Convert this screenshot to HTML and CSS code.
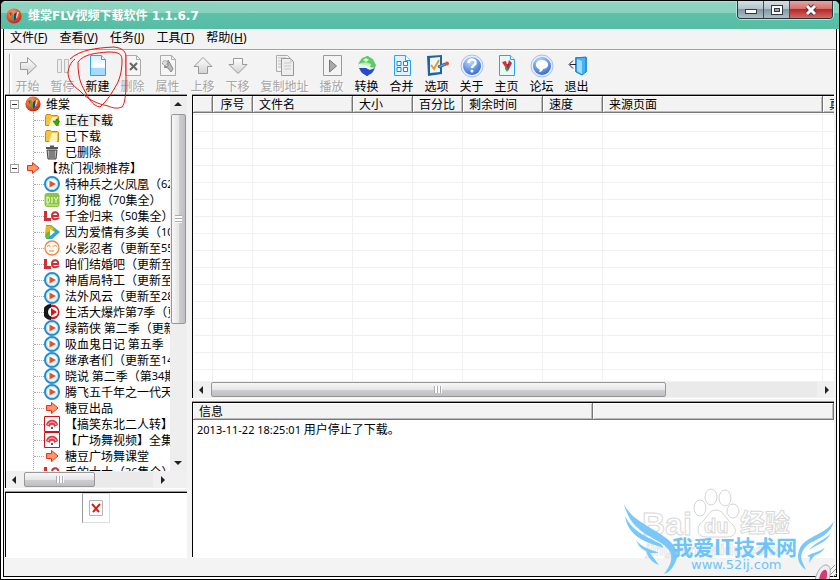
FILE: index.html
```html
<!DOCTYPE html>
<html lang="zh-CN">
<head>
<meta charset="utf-8">
<title>维棠FLV视频下载软件</title>
<link rel="stylesheet" href="styles.css">
</head>
<body>
<svg class="defs" aria-hidden="true">
  <defs>
    <radialGradient id="gRed" cx=".4" cy=".3" r=".8"><stop offset="0" stop-color="#ff9a6a"/><stop offset=".5" stop-color="#ef5434"/><stop offset="1" stop-color="#a81d10"/></radialGradient>
    <radialGradient id="gBlue" cx=".4" cy=".25" r=".8"><stop offset="0" stop-color="#c4dcff"/><stop offset=".55" stop-color="#6a9be8"/><stop offset="1" stop-color="#3567c4"/></radialGradient>
    <linearGradient id="gPage" x2="0" y2="1"><stop offset="0" stop-color="#d4ecff"/><stop offset=".5" stop-color="#fff"/><stop offset="1" stop-color="#a9dcfb"/></linearGradient>
    <linearGradient id="gGray" x2="0" y2="1"><stop offset="0" stop-color="#fff"/><stop offset="1" stop-color="#d2d2d2"/></linearGradient>
    <linearGradient id="gBall" x2="0" y2="1"><stop offset="0" stop-color="#4fc860"/><stop offset=".45" stop-color="#c8f2cc"/><stop offset=".6" stop-color="#e8f0fa"/><stop offset="1" stop-color="#1c35c8"/></linearGradient>
  </defs>
  <symbol id="logo" viewBox="0 0 16 16"><circle cx="8" cy="8" r="7.6" fill="url(#gRed)"/><path d="M3 5l3-1 2 7-2-1z" fill="#e02010"/><path d="M5 4l2 1 1 8-3-3z" fill="#38b82c"/><path d="M8 6l3-2-1 7-2 2z" fill="#2436c8"/><path d="M11 4l2 0-2 6-1 0z" fill="#f8e040"/></symbol>
  <symbol id="right" viewBox="0 0 24 24"><path d="M4.500 8.500h7v-5l9 8.500-9 8.500v-5h-7z" fill="url(#gGray)" stroke="#999"/></symbol>
  <symbol id="pause" viewBox="0 0 24 24"><path d="M6.500 5.500h4v13h-4zM13.500 5.500h4v13h-4z" fill="#eee" stroke="#bbb"/></symbol>
  <symbol id="new" viewBox="0 0 24 24"><path d="M4.500 1.500h11l4 4v16h-15z" fill="url(#gPage)" stroke="#2aa5f2"/><path d="M5 14h14v7h-14z" fill="#a6d9fb"/><path d="M15.500 1.500v4h4" fill="#e9f7ff" stroke="#2aa5f2"/></symbol>
  <symbol id="del" viewBox="0 0 24 24"><path d="M4.500 1.500h11l4 4v16h-15z" fill="#f6f6f6" stroke="#aaa"/><path d="M15.500 1.500v4h4" fill="none" stroke="#aaa"/><path d="M9 9l7 7M16 9l-7 7" stroke="#666" stroke-width="2"/></symbol>
  <symbol id="prop" viewBox="0 0 24 24"><path d="M4.500 1.500h11l4 4v16h-15z" fill="#f6f6f6" stroke="#aaa"/><path d="M15.500 1.500v4h4" fill="none" stroke="#aaa"/><circle cx="9" cy="9" r="2.500" fill="#ddd" stroke="#888" stroke-dasharray="2 1"/><path d="M12 6l3 5 2 4-2 3-3-4-4-1 4-1z" fill="#bbb" stroke="#888"/></symbol>
  <symbol id="up" viewBox="0 0 24 24"><path d="M12 3.500l9 9h-4.500v7h-9v-7H3z" fill="url(#gGray)" stroke="#999"/></symbol>
  <symbol id="down" viewBox="0 0 24 24"><path d="M12 19.500l9-9h-4.500v-6h-9v6H3z" fill="url(#gGray)" stroke="#999"/></symbol>
  <symbol id="copy" viewBox="0 0 24 24"><path d="M3.500 1.500h11l3 3v13h-14z" fill="#f4f4f4" stroke="#aaa"/><path d="M5 4h8M5 7h4M5 10h3M5 13h3" stroke="#bbb"/><path d="M8.500 4.500h9l3 3v14h-12z" fill="#eee" stroke="#999"/><path d="M17.500 4.500v3h3M11 9h7M11 12h7M11 15h7" fill="none" stroke="#c8c8c8"/></symbol>
  <symbol id="play" viewBox="0 0 24 24"><path d="M3.500 1.500h18v20h-18z" fill="#f4f4f4" stroke="#999"/><path d="M9.500 6v12l7-6z" fill="#aaa" stroke="#777"/></symbol>
  <symbol id="convert" viewBox="0 0 24 24"><path d="M12 2l6 3 3 6-2 6-7 5-7-5-2-6 4-6z" fill="url(#gBall)"/><path d="M3 10l4-6 6-2 5 4 3 5-1 3-5-1 1-3-5-2-5 1z" fill="#5ecb64"/><path d="M8 6l3-2 3 2-3 2z" fill="#d6f6d6"/><path d="M4 14h7l4 2 5-2-3 5-5 3-5-3z" fill="#2848d0"/><path d="M4 11l6 1 5 3" fill="none" stroke="#fff" stroke-width="1.500"/></symbol>
  <symbol id="merge" viewBox="0 0 24 24"><path d="M4.500 1.500h11l5 5v15h-16z" fill="#dff2ff" stroke="#2aa5f2"/><path d="M15.500 1.500v5h5" fill="#fff" stroke="#2aa5f2"/><path d="M7 7.500h4v4h-4zM13.500 7.500h4v4h-4zM7 13.500h4v4h-4zM13.500 13.500h4v4h-4z" fill="#fff" stroke="#1984dc"/></symbol>
  <symbol id="option" viewBox="0 0 24 24"><path d="M2 2l15-1v19l-14 2z" fill="#1e62ad"/><path d="M5 4l10-1v15l-10 1z" fill="#eef6ff"/><path d="M6 11l3 4 5-9" fill="none" stroke="#e79a24" stroke-width="2"/><path d="M13 12l7-3 1 2-7 3z" fill="#5ba2dc" stroke="#35679c"/><circle cx="22" cy="9.500" r="2" fill="#ef4832"/></symbol>
  <symbol id="about" viewBox="0 0 24 24"><circle cx="12" cy="12" r="11" fill="#e8effb" stroke="#a5bfe9"/><circle cx="12" cy="12" r="9" fill="url(#gBlue)"/><path d="M8.500 9c0-5 8-4 7 0 0 2-3.500 2-3.500 5" fill="none" stroke="#fff" stroke-width="2.500"/><circle cx="12" cy="17" r="1.500" fill="#fff"/></symbol>
  <symbol id="home" viewBox="0 0 24 24"><path d="M4.500 1.500h11l4 4v16h-15z" fill="#e8f6ff" stroke="#2aa5f2"/><path d="M15.500 1.500v4h4" fill="#fff" stroke="#2aa5f2"/><path d="M7 8l4-1 2 7-1 2z" fill="#e02b1b"/><path d="M10 10l3 6-1 2-2-3z" fill="#27b32f"/><path d="M14 6l3 3-4 8-1-4z" fill="#e02b1b"/><path d="M12 10l2 0-1 6z" fill="#2a3fc8"/></symbol>
  <symbol id="forum" viewBox="0 0 24 24"><circle cx="12" cy="12" r="11" fill="#e8effb" stroke="#a5bfe9"/><circle cx="12" cy="12" r="9" fill="url(#gBlue)"/><path d="M12 6c8 0 8 9 1 9-1 3-3 3-4 3 1-1 1-2 0-3-5-2-4-9 3-9z" fill="#fff"/></symbol>
  <symbol id="exit" viewBox="0 0 24 24"><path d="M10.500 3.500h11v14h-11z" fill="#fff" stroke="#2aa5f2"/><path d="M11 4l10-1v15l-4 3-6-3z" fill="#45b2f5" stroke="#167fd3"/><path d="M12 5l5 2v13l-5-3z" fill="#9bdcff"/><path d="M11 10.500h-6M8 6.500l-4 4 4 4" fill="none" stroke="#223"/></symbol>
  <symbol id="folder" viewBox="0 0 16 16"><path d="M1.500 4.500l1-2h4l1 1h6l1 1v9h-13z" fill="#f5c542" stroke="#c08a1c"/><path d="M8 5h5v9H5z" fill="#fdf3b8"/></symbol>
  <symbol id="trash" viewBox="0 0 16 16"><path d="M2 4h12M6 2.500h4" stroke="#555" stroke-width="2"/><path d="M3 6h10l-1 9H4z" fill="#bbb" stroke="#444"/><path d="M6 6v8M8 6v8M10 6v8" stroke="#444"/></symbol>
  <symbol id="arrow" viewBox="0 0 16 16"><path d="M2.500 5.500h5v-3l6.500 5.500-6.500 5.500v-3h-5z" fill="#ff9668" stroke="#e8321c"/></symbol>
  <symbol id="vid" viewBox="0 0 16 16"><circle cx="8" cy="8" r="7" fill="#fff" stroke="#238fd2" stroke-width="2"/><circle cx="8" cy="8" r="5.500" fill="none" stroke="#a6dcf8"/><path d="M5.500 4.500l6.500 3.500-6.500 3.500z" fill="#ee4e2c"/></symbol>
  <symbol id="diy" viewBox="0 0 16 16"><rect x=".5" y="1" width="15" height="14" rx="3" fill="#8cc63e"/><path d="M3 5v6h1c2 0 2-6 0-6zM8 5v6M10 5l2 3 2-3M12 8v3" fill="none" stroke="#fff"/><path d="M2 13h12" stroke="#d9efb8"/></symbol>
  <symbol id="le" viewBox="0 0 16 16"><path d="M1.500 3v8.500h5.500" fill="none" stroke="#cf2f35" stroke-width="3"/><path d="M8 8h6c1-5-6-5-6 0 0 4 4 4 7 2" fill="none" stroke="#cf2f35" stroke-width="2"/></symbol>
  <symbol id="tri" viewBox="0 0 16 16"><path d="M2 1l5 0 9 7-8 7H2z" fill="#2aa6e0"/><path d="M2 1h5l5 5-9 9-2-2z" fill="#6fbe28"/><path d="M2 2l5 0 3 3-8 4z" fill="#f3b51e"/><path d="M6 5l5 3-5 4z" fill="#fff"/></symbol>
  <symbol id="face" viewBox="0 0 16 16"><circle cx="8" cy="8" r="7" fill="#fff6ed" stroke="#ee8438" stroke-width="1.300"/><path d="M3 7c1-2 3-2 3 0M9 7c1-2 3-2 4 0M5 11h5" fill="none" stroke="#ee8438"/></symbol>
  <symbol id="dark" viewBox="0 0 16 16"><circle cx="8" cy="8" r="7.500" fill="#d6141c"/><path d="M7 0a8 8 0 0 0 0 16z" fill="#181818"/><circle cx="9" cy="8" r="5" fill="#fff"/><path d="M7 4l6 4-6 4z" fill="#d6141c"/></symbol>
  <symbol id="fan" viewBox="0 0 16 16"><path d="M.5.5h15v15H.5z" fill="#fff" stroke="#d3131b"/><path d="M2 9c1-7 11-7 12 0l-4 2H6z" fill="#e33c48"/><path d="M4 9c1-4 7-4 8 0" fill="none" stroke="#fbc5c8"/><path d="M6 11c0-3 4-3 4 0z" fill="#fff"/><circle cx="8" cy="12" r="1" fill="#222"/></symbol>
</svg>

<div class="window">
  <header class="title">
    <svg class="i16"><use href="#logo"/></svg>
    <h1>维棠FLV视频下载软件 1.1.6.7</h1>
    <div class="caps">
      <button aria-label="最小化"><svg width="14" height="12"><rect x="1.500" y="5.500" width="11" height="4" fill="#fff" stroke="#333a44"/></svg></button>
      <button aria-label="最大化"><svg width="14" height="12"><rect x="1.500" y="1.500" width="11" height="9" fill="#fff" stroke="#333a44"/><rect x="4.500" y="4.500" width="5" height="3" fill="#8fa7b8" stroke="#333a44"/></svg></button>
      <button class="close" aria-label="关闭"><svg width="14" height="12"><path d="M3 2l8 8M11 2l-8 8" stroke="#553244" stroke-width="5"/><path d="M3 2l8 8M11 2l-8 8" stroke="#fff" stroke-width="3"/></svg></button>
    </div>
  </header>
  <div class="client">
    <nav class="menu">
      <button>文件<span>(<u>F</u>)</span></button><button>查看<span>(<u>V</u>)</span></button><button>任务<span>(<u>J</u>)</span></button><button>工具<span>(<u>T</u>)</span></button><button>帮助<span>(<u>H</u>)</span></button>
    </nav>
    <div class="tools">
      <button disabled><svg><use href="#right"/></svg>开始</button>
      <button disabled><svg><use href="#pause"/></svg>暂停</button>
      <button><svg><use href="#new"/></svg>新建</button>
      <button disabled><svg><use href="#del"/></svg>删除</button>
      <button disabled><svg><use href="#prop"/></svg>属性</button>
      <button disabled><svg><use href="#up"/></svg>上移</button>
      <button disabled><svg><use href="#down"/></svg>下移</button>
      <button disabled class="wide"><svg><use href="#copy"/></svg>复制地址</button>
      <button disabled><svg><use href="#play"/></svg>播放</button>
      <button><svg><use href="#convert"/></svg>转换</button>
      <button><svg><use href="#merge"/></svg>合并</button>
      <button><svg><use href="#option"/></svg>选项</button>
      <button><svg><use href="#about"/></svg>关于</button>
      <button><svg><use href="#home"/></svg>主页</button>
      <button><svg><use href="#forum"/></svg>论坛</button>
      <button><svg><use href="#exit"/></svg>退出</button>
    </div>
    <main>
      <aside>
        <section class="panel treebox">
          <div class="treearea">
            <ul class="tree">
              <li class="root"><div class="row"><i class="box"></i><svg><use href="#logo"/></svg>维棠</div>
                <ul>
                  <li><svg><use href="#folder"/><path d="M9 9h3V7h2v2h2l-3.500 5z" fill="#22b022" stroke="#0a7a12" stroke-width=".5"/></svg><mark>正在下载</mark></li>
                  <li><svg><use href="#folder"/></svg>已下载</li>
                  <li><svg><use href="#trash"/></svg>已删除</li>
                </ul>
              </li>
              <li class="root"><div class="row"><i class="box"></i><svg><use href="#arrow"/></svg>【热门视频推荐】</div>
                <ul>
                  <li><svg><use href="#vid"/></svg>特种兵之火凤凰（<b>62</b></li>
                  <li><svg><use href="#diy"/></svg>打狗棍（<b>70</b>集全）</li>
                  <li><svg><use href="#le"/></svg>千金归来（<b>50</b>集全）</li>
                  <li><svg><use href="#tri"/></svg>因为爱情有多美（<b>10</b></li>
                  <li><svg><use href="#face"/></svg>火影忍者（更新至<b>55</b></li>
                  <li><svg><use href="#le"/></svg>咱们结婚吧（更新至</li>
                  <li><svg><use href="#vid"/></svg>神盾局特工（更新至</li>
                  <li><svg><use href="#vid"/></svg>法外风云（更新至<b>28</b></li>
                  <li><svg><use href="#dark"/></svg>生活大爆炸第<b>7</b>季（更</li>
                  <li><svg><use href="#vid"/></svg>绿箭侠 第二季（更新</li>
                  <li><svg><use href="#vid"/></svg>吸血鬼日记 第五季（</li>
                  <li><svg><use href="#vid"/></svg>继承者们（更新至<b>14</b></li>
                  <li><svg><use href="#vid"/></svg>晓说 第二季（第<b>34</b>期</li>
                  <li><svg><use href="#vid"/></svg>腾飞五千年之一代天</li>
                  <li><svg><use href="#arrow"/></svg>糖豆出品</li>
                  <li><svg><use href="#fan"/></svg>【搞笑东北二人转】</li>
                  <li><svg><use href="#fan"/></svg>【广场舞视频】全集</li>
                  <li><svg><use href="#arrow"/></svg>糖豆广场舞课堂</li>
                  <li><svg><use href="#le"/></svg>手的大大（<b>36</b>集全）</li>
                </ul>
              </li>
            </ul>
          </div>
          <div class="vbar"><i class="up"></i><div class="thumb"><span></span></div><i class="down"></i></div>
          <div class="hbar"><i class="left"></i><div class="track"><div class="thumb"><span></span></div></div><i class="rt"></i></div>
        </section>
        <section class="panel preview">
          <div class="broken"><svg width="14" height="16"><path d="M.5.5h13v15H.5z" fill="#fff" stroke="#b5b5b5"/><path d="M3 4l7 8M11 4l-7 8" stroke="#d82018" stroke-width="2"/></svg></div>
        </section>
      </aside>
      <div class="right">
        <section class="panel list">
          <div class="listarea">
            <table>
              <colgroup><col class="c20"><col class="c40"><col class="c100"><col class="c60"><col class="c50"><col class="c80"><col class="c60"><col class="c220"><col></colgroup>
              <thead><tr><th></th><th class="mid">序号</th><th>文件名</th><th>大小</th><th>百分比</th><th>剩余时间</th><th>速度</th><th>来源页面</th><th>真实地址</th></tr></thead>
            </table>
            <div class="cells"><i class="c20"></i><i class="c40"></i><i class="c100"></i><i class="c60"></i><i class="c50"></i><i class="c80"></i><i class="c60"></i><i class="c220"></i></div>
          </div>
          <div class="hbar big"><i class="left"></i><div class="track"><div class="thumb"><span></span></div></div><i class="rt"></i></div>
        </section>
        <section class="panel info">
          <table>
            <colgroup><col class="c400"><col></colgroup>
            <thead><tr><th>信息</th><th></th></tr></thead>
            <tbody><tr><td colspan="2"><b>2013-11-22 18:25:01</b> 用户停止了下载。</td></tr></tbody>
          </table>
        </section>
      </div>
    </main>
    <footer></footer>
  </div>
  <svg class="ring" width="70" height="70" viewBox="62 44 70 70" fill="none" stroke="#f01010"><path d="M70 59C80 50 95 48 114 47c9 1 12 5 12 10v33c-1 8-1 13-4 17-5 2-9 1-14-1-10-2-20-6-28-15-8-6-12-11-12-19 1-5 2-9 7-13M78 62c6-8 18-9 30-10 11 0 14 2 14 8 0 8-1 16-5 24-5 9-10 17-17 23-6-1-10-6-13-12-5-9-9-15-9-32z"/></svg>
  <div class="mark">
    <svg width="220" height="110" viewBox="620 470 220 110">
      <g class="bd"><text x="642" y="535" font-size="32">Bai</text></g>
      <g fill="#fff" stroke="#d4d4d4"><ellipse cx="700" cy="508" rx="6" ry="8"/><ellipse cx="711" cy="497" rx="6" ry="8"/><ellipse cx="725" cy="498" rx="6" ry="8"/><ellipse cx="733" cy="511" rx="6" ry="7"/><path d="M716 510c8 0 10 10 17 15 5 6 2 12-6 12h-21c-8 0-10-7-6-13 6-4 8-14 16-14z"/></g>
      <g class="bd"><text x="704" y="533" font-size="20">du</text><text x="740" y="532" font-size="25">经验</text><text class="sm" x="646" y="555" font-size="15">jingyan.baidu.com</text></g>
      <g fill="#7ac8fa">
        <path d="M624 504c7 16 26 22 42 34 11 8 14 17 8 27-3 5-6 8-10 9 6-8 9-15 6-22-7-15-38-14-46-48z"/>
        <path d="M625 516c8 16 21 20 36 28l3 4c-20-6-36-12-39-32z"/>
        <path d="M636 540c6 8 14 9 23 13l-9 0 9 12c-9-3-11-9-13-14-5-2-8-6-10-11z"/>
        <path d="M834 521c-3 13-14 17-24 22-8 6-10 12-8 18l4 9c-8-5-10-14-6-22 6-12 25-13 34-27z"/>
        <path d="M831 533c-4 9-13 11-22 17 6-8 16-10 22-17z"/>
        <path d="M825 547c-3 6-7 7-11 9l-5 7 1-6-3-1c7-4 13-4 18-9z"/>
      </g>
      <g class="it"><text x="672" y="555" font-size="21">我爱IT技术网</text><text class="url" x="691" y="569" font-size="13">www.52ij.com</text></g>
      <path d="M830 575l6-6M833 577l4-4M829 571l6-6" stroke="#999"/><path d="M815 580c2-9 7-16 12-15 5 2 3 10 2 15z" fill="#eee" stroke="#aaa"/><path d="M819 580c1-7 4-11 7-10 2 2 1 7 0 10z" fill="#d83878"/>
    </svg>
  </div>
</div>
</body>
</html>
```

FILE: styles.css
```css
* { box-sizing: border-box; }
body {
  margin: 0;
  font: 12px/16px "Noto Sans CJK SC", sans-serif;
  color: #000;
  background: #000;
}
.defs { position: absolute; width: 0; height: 0; }
button { border: 0; padding: 0; background: none; font: inherit; color: inherit; }
ul { list-style: none; margin: 0; padding: 0; }
i { display: block; flex: none; }
b, .menu span { font: 11px/16px "Noto Sans", sans-serif; }
.menu span { font-size: 12px; }
.window {
  position: relative;
  display: flex;
  flex-direction: column;
  height: 100vh;
  border: 1px solid #000;
  border-radius: 6px 6px 0 0;
  overflow: hidden;
  background: #fff;
}

/* Title bar */
.title {
  display: flex;
  align-items: center;
  gap: 6px;
  height: 28px;
  flex: none;
  padding: 2px 6px 0 5px;
  background: linear-gradient(#b4e4d6 0, #8cd4c0 2px, #8ad3be 12px, #5cc1a8 12px, #56bda4 100%);
}
.title h1 {
  flex: 1;
  margin: 0;
  font: bold 12px/16px "DejaVu Sans", "Noto Sans CJK SC", sans-serif;
  color: #fff;
}
.i16 { width: 16px; height: 16px; }
.caps {
  display: flex;
  align-self: flex-start;
  height: 18px;
  margin-top: -2px;
  border: 1px solid #26343e;
  border-top: 0;
  border-radius: 0 0 4px 4px;
  box-shadow: 0 0 0 1px #b9e4d8;
  overflow: hidden;
}
.caps button {
  width: 26px;
  display: grid;
  place-items: center;
  border-right: 1px solid #3b4d58;
  background: linear-gradient(#d4dfe3, #b3c3ca 45%, #8398a4 50%, #aebfc6);
}
.caps .close { width: 42px; border: 0; background: linear-gradient(#e6a4a0, #d8706a 45%, #b8282a 50%, #d46a64); }

.client {
  flex: 1;
  min-height: 0;
  display: flex;
  flex-direction: column;
  margin: 0 2px 2px;
  border: solid #000;
  border-width: 0 1px 1px;
  background: #f3f3f3;
}
.menu {
  display: flex;
  gap: 12px;
  height: 21px;
  flex: none;
  padding: 0 6px 3px;
  border-bottom: 1px solid #a0a0a0;
}
.tools {
  display: flex;
  height: 45px;
  flex: none;
  border-top: 1px solid #fff;
  padding: 3px 0 0 5px;
}
.tools::before { content: ""; width: 2px; margin: 0 -2px 0 0; border-left: 1px solid #aaa; background: #fff; }
.tools button {
  width: 35px;
  display: flex;
  flex-direction: column;
  align-items: center;
  white-space: nowrap;
}
.tools .wide { width: 59px; }
.tools svg { width: 24px; height: 24px; flex: none; }
.tools button:disabled { color: #a5a5a5; text-shadow: 1px 1px #fff; }

/* Panels */
main { flex: 1; min-height: 0; display: flex; gap: 5px; padding: 0 2px 0 1px; }
aside { width: 182px; display: flex; flex-direction: column; gap: 4px; }
.right { flex: 1; min-width: 0; display: flex; flex-direction: column; gap: 4px; }
.panel {
  border: solid #000;
  border-width: 1px 0 0 1px;
  box-shadow: 0 -1px #999, 0 1px #fff;
  background: #fff;
  overflow: hidden;
}
.treebox {
  flex: 1;
  min-height: 0;
  display: grid;
  grid-template: 1fr 17px / 1fr 17px;
  background: #f0f0f0;
}
.treearea { overflow: hidden; background: #fff; white-space: nowrap; min-height: 0; }
.preview { height: 65px; flex: none; }
.list { flex: 1; min-height: 0; display: flex; flex-direction: column; }
.info { height: 155px; flex: none; }

/* Tree */
.root { position: relative; }
.root:first-child::before {
  content: "";
  position: absolute;
  left: 8px;
  top: 12px;
  height: 56px;
  border-left: 1px dotted #aaa;
}
.row { display: flex; gap: 5px; align-items: center; height: 16px; padding-left: 4px; }
.box {
  width: 9px;
  height: 9px;
  border: 1px solid #a0a0a0;
  background: linear-gradient(#333, #333) center / 5px 1px no-repeat #fff;
}
.tree svg { width: 16px; height: 16px; flex: none; }
.row svg { margin: 0 0 0 1px; }
.root ul { margin-left: 27px; border-left: 1px dotted #aaa; }
.root li { display: flex; align-items: center; height: 16px; white-space: pre; }
.root li::before { content: ""; width: 10px; flex: none; border-top: 1px dotted #aaa; }
.root li svg { margin-right: 5px; }
mark { background: #f0f0f0; color: inherit; line-height: 14px; }

/* Scroll bars */
.vbar { display: flex; flex-direction: column; align-items: center; padding: 6px 1px 6px 0; background: #eee; }
.vbar .thumb { width: 15px; height: 210px; margin-top: 8px; background: linear-gradient(90deg, #f7f7f7, #e6e6e8 50%, #cfcfd3 51%, #bfbfc3); }
.vbar .thumb span { width: 7px; height: 8px; background: repeating-linear-gradient(#aaa 0 1px, #fff 1px 3px); }
.vbar .down { margin-top: auto; }
.thumb { display: grid; place-items: center; border: 1px solid #979797; border-radius: 2px; }
.hbar { display: flex; align-items: center; gap: 8px; height: 17px; padding: 0 5px 0 6px; background: #f0f0f0; }
.hbar .track { flex: 1; height: 15px; background: #eaeaea; }
.hbar .thumb { width: 71px; height: 15px; background: linear-gradient(#f7f7f7, #e6e6e8 50%, #cfcfd3 51%, #bfbfc3); }
.hbar .thumb span { width: 8px; height: 7px; background: repeating-linear-gradient(90deg, #aaa 0 1px, #fff 1px 3px); }
.big { flex: none; }
.big .thumb { width: 75%; }
.up { border: solid transparent; border-width: 0 4px 4px; border-bottom-color: #222; }
.down { border: solid transparent; border-width: 4px 4px 0; border-top-color: #222; }
.left { border: solid transparent; border-width: 4px 4px 4px 0; border-right-color: #222; }
.rt { border: solid transparent; border-width: 4px 0 4px 4px; border-left-color: #222; }

.broken {
  width: 28px;
  height: 30px;
  margin-left: 76px;
  display: grid;
  place-items: center;
  border: 1px solid #ddd;
  border-left-color: #999;
}

/* Tables */
.listarea { flex: 1; min-height: 0; overflow: hidden; display: flex; flex-direction: column; }
table { width: 100%; table-layout: fixed; border-collapse: separate; border-spacing: 0; }
.list table { width: 710px; }
th {
  height: 17px;
  padding: 0 0 0 6px;
  font-weight: normal;
  line-height: 14px;
  text-align: left;
  white-space: nowrap;
  background: #f3f3f3;
  border: solid #777;
  border-width: 0 1px 1px 0;
  box-shadow: inset 1px 1px #fff, inset -1px -1px #bbb;
}
.mid { padding: 0; text-align: center; }
td { padding: 1px 4px; }
.cells { flex: 1; display: flex; background: repeating-linear-gradient(#f0f0f0 0 1px, transparent 1px 17px) 0 1px; }
.cells i { border-right: 1px solid #f0f0f0; }
.c20 { width: 20px; }
.c40 { width: 40px; }
.c50 { width: 50px; }
.c60 { width: 60px; }
.c80 { width: 80px; }
.c100 { width: 100px; }
.c220 { width: 220px; }
.c400 { width: 400px; }
footer { height: 19px; flex: none; }

/* Overlays */
.ring { position: absolute; left: 61px; top: 43px; pointer-events: none; }
.mark { position: absolute; right: -1px; bottom: -1px; height: 110px; pointer-events: none; }
.bd { font-family: "Liberation Sans", "Noto Sans CJK SC", sans-serif; font-weight: bold; fill: #fff; stroke: #d8d8d8; }
.sm { fill: none; stroke: #e6e6e6; }
.it { font-family: "Noto Sans CJK SC", sans-serif; font-weight: bold; fill: #6cc4fa; }
.url { font-family: "DejaVu Sans", sans-serif; font-weight: normal; }
```
